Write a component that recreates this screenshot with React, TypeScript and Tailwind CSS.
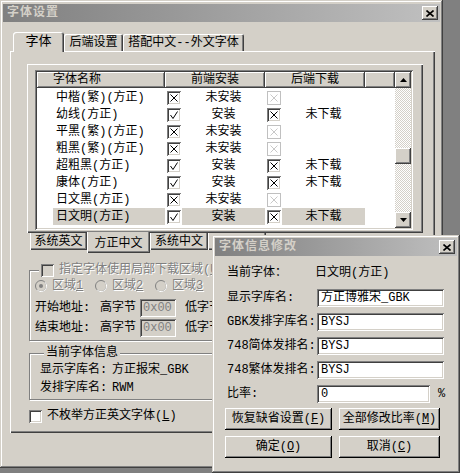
import React from 'react';

type Mark = 'v' | 'x' | 'xd';

type Row = { name: string; front: Mark; frontText: string; back: Mark; backText: string };

const rows: Row[] = [
  { name: '中楷(繁)(方正)', front: 'x', frontText: '未安装', back: 'xd', backText: '' },
  { name: '幼线(方正)', front: 'v', frontText: '安装', back: 'x', backText: '未下载' },
  { name: '平黑(繁)(方正)', front: 'x', frontText: '未安装', back: 'xd', backText: '' },
  { name: '粗黑(繁)(方正)', front: 'x', frontText: '未安装', back: 'xd', backText: '' },
  { name: '超粗黑(方正)', front: 'v', frontText: '安装', back: 'x', backText: '未下载' },
  { name: '康体(方正)', front: 'v', frontText: '安装', back: 'x', backText: '未下载' },
  { name: '日文黑(方正)', front: 'x', frontText: '未安装', back: 'xd', backText: '' },
  { name: '日文明(方正)', front: 'v', frontText: '安装', back: 'x', backText: '未下载' },
];

const raised =
  'shadow-[inset_-1px_-1px_0_#404040,inset_1px_1px_0_#ffffff,inset_-2px_-2px_0_#808080,inset_2px_2px_0_#d4d0c8]';
const sunken =
  'shadow-[inset_1px_1px_0_#808080,inset_-1px_-1px_0_#ffffff,inset_2px_2px_0_#404040,inset_-2px_-2px_0_#d4d0c8]';
const disabledText = 'text-[#808080] [text-shadow:1px_1px_0_#ffffff]';

const CloseButton: React.FC = () => (
  <span className={`w-[16px] h-[14px] bg-[#d4d0c8] flex items-center justify-center ${raised}`}>
    <svg width="8" height="7" viewBox="0 0 8 7">
      <path d="M0.5 0.5 7.5 6.5M7.5 0.5 0.5 6.5" stroke="#000" strokeWidth="1.6" />
    </svg>
  </span>
);

const TitleBar: React.FC<{ title: string }> = ({ title }) => (
  <div className="h-[18px] flex items-center justify-between pl-[4px] pr-[2px] bg-linear-to-r from-[#808080] to-[#c0c0c0]">
    <span className="text-[12px] font-bold text-[#d4d0c8] tracking-[1px]">{title}</span>
    <CloseButton />
  </div>
);

const MarkBox: React.FC<{ mark: Mark }> = ({ mark }) => {
  if (mark === 'xd') {
    return (
      <span className="w-[14px] h-[14px] border border-[#c0c0c0] bg-white flex items-center justify-center">
        <svg width="12" height="12" viewBox="0 0 12 12">
          <path d="M2.5 2.5 9.5 9.5M9.5 2.5 2.5 9.5" stroke="#c8c8c8" strokeWidth="1" />
        </svg>
      </span>
    );
  }
  return (
    <span className={`w-[14px] h-[14px] bg-white block ${sunken}`}>
      <svg width="14" height="14" viewBox="0 0 14 14" className="block">
        {mark === 'v' ? (
          <polyline points="3.5,7 6,10.5 10.5,3.5" fill="none" stroke="#000" strokeWidth="1" />
        ) : (
          <path d="M3.5 3.5 10.5 10.5M10.5 3.5 3.5 10.5" stroke="#000" strokeWidth="1" />
        )}
      </svg>
    </span>
  );
};

const HeaderCell: React.FC<{ className: string; children?: React.ReactNode }> = ({ className, children }) => (
  <div
    className={`h-[16px] flex items-center bg-[#d4d0c8] shadow-[inset_-1px_-1px_0_#404040,inset_1px_1px_0_#ffffff,inset_-2px_-2px_0_#808080] ${className}`}
  >
    {children}
  </div>
);

const Arrow: React.FC<{ up?: boolean }> = ({ up }) => (
  <span className={`w-[16px] h-[16px] bg-[#d4d0c8] flex items-center justify-center ${raised}`}>
    <svg width="7" height="4" viewBox="0 0 7 4">
      <polygon points={up ? '3.5,0 7,4 0,4' : '0,0 7,0 3.5,4'} fill="#000" />
    </svg>
  </span>
);

const ListRow: React.FC<{ row: Row; selected: boolean }> = ({ row, selected }) => {
  const bg = selected ? 'bg-[#d4d0c8]' : '';
  return (
    <div className="flex h-[17px]">
      <div className="w-[128px] pl-[16px] h-full">
        <div className={`h-full flex items-center pl-[3px] whitespace-nowrap ${bg}`}>{row.name}</div>
      </div>
      <div className="w-[100px] h-full flex items-center">
        <div className="pl-[2px] pr-[1px] h-full flex items-center">
          <MarkBox mark={row.front} />
        </div>
        <div className={`flex-1 h-full flex items-center justify-center ${bg}`}>{row.frontText}</div>
      </div>
      <div className="w-[100px] h-full flex items-center">
        <div className="pl-[2px] pr-[1px] h-full flex items-center">
          <MarkBox mark={row.back} />
        </div>
        <div className={`flex-1 h-full flex items-center justify-center ${bg}`}>{row.backText}</div>
      </div>
    </div>
  );
};

const Radio: React.FC<{ checked?: boolean }> = ({ checked }) => (
  <svg width="12" height="12" viewBox="0 0 12 12" className="shrink-0">
    <circle cx="6" cy="6" r="5.5" fill="#d4d0c8" stroke="#808080" />
    <path d="M10 2.2A5.3 5.3 0 0 1 2.2 10" fill="none" stroke="#ffffff" />
    {checked && <circle cx="6" cy="6" r="2" fill="#808080" />}
  </svg>
);

const SmallCheck: React.FC<{ disabled?: boolean }> = ({ disabled }) => (
  <span className={`w-[13px] h-[13px] block shrink-0 ${disabled ? 'bg-[#d4d0c8]' : 'bg-white'} ${sunken}`} />
);

const DisabledInput: React.FC = () => (
  <span className={`w-[36px] h-[18px] bg-[#d4d0c8] flex items-center pl-[3px] text-[#808080] ${sunken}`}>0x00</span>
);

const Field: React.FC<{ label: string; value: string; w?: string }> = ({ label, value, w = 'w-[127px]' }) => (
  <div className="flex items-center h-[18px]">
    <span className="w-[90px] whitespace-nowrap">{label}</span>
    <span className={`${w} h-[18px] bg-white flex items-center pl-[4px] ${sunken}`}>{value}</span>
  </div>
);

const Button: React.FC<{ w: string; children: React.ReactNode }> = ({ w, children }) => (
  <div
    className={`${w} h-[22px] bg-[#d4d0c8] flex items-center justify-center shadow-[inset_-1px_-1px_0_#000000,inset_1px_1px_0_#ffffff,inset_-2px_-2px_0_#808080,inset_2px_2px_0_#d4d0c8]`}
  >
    {children}
  </div>
);

const Key: React.FC<{ k: string }> = ({ k }) => (
  <span>
    (<span className="underline">{k}</span>)
  </span>
);

export default function App() {
  return (
    <div className="relative w-[460px] h-[473px] bg-[#808080] overflow-hidden text-[12px] leading-[14px] text-black font-['Liberation_Mono','Noto_Sans_CJK_SC',monospace]">
      {/* 字体设置 window */}
      <div className="absolute left-0 top-0 w-[443px] h-[468px] bg-[#d4d0c8] p-[3px] shadow-[inset_-1px_-1px_0_#404040,inset_1px_1px_0_#d4d0c8,inset_-2px_-2px_0_#808080,inset_2px_2px_0_#ffffff]">
        <div className="mt-[1px]">
          <TitleBar title="字体设置" />
        </div>

        <div className="flex items-end pl-[10px] mt-[9px] h-[20px]">
          <div className="relative z-10 -mb-px h-[20px] w-[51px] bg-[#d4d0c8] rounded-t-[3px] flex items-center justify-center text-[13px] shadow-[inset_1px_1px_0_#ffffff,inset_-1px_0_0_#404040,inset_-2px_0_0_#808080]">
            字体
          </div>
          <div className="h-[17px] w-[59px] rounded-t-[2px] flex items-center justify-center shadow-[inset_1px_1px_0_#ffffff,inset_-1px_0_0_#404040,inset_-2px_0_0_#808080]">
            后端设置
          </div>
          <div className="h-[17px] w-[121px] rounded-t-[2px] flex items-center justify-center whitespace-nowrap shadow-[inset_1px_1px_0_#ffffff,inset_-1px_0_0_#404040,inset_-2px_0_0_#808080]">
            搭配中文--外文字体
          </div>
        </div>

        <div className="ml-[7px] w-[425px] h-[382px] pt-[13px] pl-[17px] shadow-[inset_1px_1px_0_#ffffff,inset_-1px_-1px_0_#404040,inset_-2px_-2px_0_#808080]">
          {/* list page */}
          <div className="w-[396px] h-[169px] pt-[6px] pl-[8px] shadow-[inset_1px_1px_0_#ffffff,inset_-1px_-1px_0_#404040,inset_-2px_-2px_0_#808080]">
            <div className={`w-[378px] h-[160px] p-[2px] bg-white ${sunken}`}>
              <div className="flex h-full">
                <div className="flex-1 flex flex-col">
                  <div className="flex">
                    <HeaderCell className="w-[128px] pl-[16px]">字体名称</HeaderCell>
                    <HeaderCell className="w-[100px] justify-center">前端安装</HeaderCell>
                    <HeaderCell className="w-[100px] justify-center">后端下载</HeaderCell>
                    <HeaderCell className="flex-1" />
                  </div>
                  <div className="pt-[1px]">
                    {rows.map((r, i) => (
                      <ListRow key={r.name} row={r} selected={i === rows.length - 1} />
                    ))}
                  </div>
                </div>
                <div className="w-[16px] flex flex-col">
                  <Arrow up />
                  <div className="flex-1 bg-[image:repeating-conic-gradient(#d4d0c8_0_25%,#ffffff_0_50%)] bg-[length:2px_2px]">
                    <div className="h-[60px]" />
                    <div className={`h-[16px] bg-[#d4d0c8] ${raised}`} />
                  </div>
                  <Arrow />
                </div>
              </div>
            </div>
          </div>

          {/* bottom tabs */}
          <div className="flex ml-[3px] h-[20px]">
            <div className="h-[17px] w-[57px] flex items-center justify-center shadow-[inset_1px_0_0_#ffffff,inset_-1px_-1px_0_#404040,inset_-2px_-2px_0_#808080]">
              系统英文
            </div>
            <div className="relative z-10 -mt-px h-[21px] w-[63px] bg-[#d4d0c8] flex items-center justify-center pt-[3px] shadow-[inset_1px_0_0_#ffffff,inset_-1px_-1px_0_#404040,inset_-2px_-2px_0_#808080]">
              方正中文
            </div>
            <div className="h-[17px] w-[58px] flex items-center justify-center shadow-[inset_1px_0_0_#ffffff,inset_-1px_-1px_0_#404040,inset_-2px_-2px_0_#808080]">
              系统中文
            </div>
            <div className="h-[17px] w-[58px] shadow-[inset_1px_0_0_#ffffff,inset_-1px_-1px_0_#404040,inset_-2px_-2px_0_#808080]" />
          </div>

          {/* 局部下载区域 */}
          <fieldset className="mt-[10px] ml-[2px] w-[388px] border border-[#808080] shadow-[inset_1px_1px_0_#ffffff,1px_1px_0_#ffffff] pl-[5px] pb-[3px]">
            <legend className="ml-[4px] px-[2px] bg-[#d4d0c8] flex items-center gap-[5px]">
              <SmallCheck disabled />
              <span className={disabledText}>
                指定字体使用局部下载区域<Key k="U" />
              </span>
            </legend>
            <div className="flex items-center h-[14px] mt-[2px]">
              {['1', '2', '3'].map((n, i) => (
                <div key={n} className="w-[60px] flex items-center gap-[5px]">
                  <Radio checked={i === 0} />
                  <span className={disabledText}>
                    区域<span className="underline">{n}</span>
                  </span>
                </div>
              ))}
            </div>
            <div className="flex items-center h-[18px] mt-[6px]">
              <span className="w-[65px]">开始地址:</span>
              <span className="w-[40px]">高字节</span>
              <DisabledInput />
              <span className="ml-[9px]">低字节</span>
            </div>
            <div className="flex items-center h-[18px] mt-[2px]">
              <span className="w-[65px]">结束地址:</span>
              <span className="w-[40px]">高字节</span>
              <DisabledInput />
              <span className="ml-[9px]">低字节</span>
            </div>
          </fieldset>

          {/* 当前字体信息 */}
          <fieldset className="mt-[5px] ml-[2px] w-[388px] border border-[#808080] shadow-[inset_1px_1px_0_#ffffff,1px_1px_0_#ffffff] pl-[10px] pb-[4px]">
            <legend className="ml-[4px] px-[2px] bg-[#d4d0c8]">当前字体信息</legend>
            <div className="flex items-center h-[14px] mt-[3px]">
              <span className="w-[72px]">显示字库名:</span>
              <span>方正报宋_GBK</span>
            </div>
            <div className="flex items-center h-[14px] mt-[4px]">
              <span className="w-[72px]">发排字库名:</span>
              <span>RWM</span>
            </div>
          </fieldset>

          <div className="flex items-center gap-[5px] ml-[2px] mt-[9px] h-[14px]">
            <SmallCheck />
            <span>
              不枚举方正英文字体<Key k="L" />
            </span>
          </div>
        </div>
      </div>

      {/* 字体信息修改 dialog */}
      <div className="absolute left-[212px] top-[235px] w-[248px] h-[238px] bg-[#d4d0c8] p-[3px] shadow-[inset_-1px_-1px_0_#404040,inset_1px_1px_0_#d4d0c8,inset_-2px_-2px_0_#808080,inset_2px_2px_0_#ffffff]">
        <TitleBar title="字体信息修改" />
        <div className="pl-[12px] flex flex-col">
          <div className="flex items-center h-[14px] mt-[10px]">
            <span className="w-[88px]">当前字体：</span>
            <span>日文明(方正)</span>
          </div>
          <div className="flex flex-col gap-[6px] mt-[9px]">
            <Field label="显示字库名:" value="方正博雅宋_GBK" />
            <Field label="GBK发排字库名:" value="BYSJ" />
            <Field label="748简体发排名:" value="BYSJ" />
            <Field label="748繁体发排名:" value="BYSJ" />
            <div className="flex items-center">
              <Field label="比率:" value="0" w="w-[113px]" />
              <span className="ml-[8px]">%</span>
            </div>
          </div>
        </div>
        <div className="pl-[10px] mt-[5px] flex flex-col gap-[6px]">
          <div className="flex gap-[7px]">
            <Button w="w-[107px]">
              恢复缺省设置<Key k="F" />
            </Button>
            <Button w="w-[101px]">
              全部修改比率<Key k="M" />
            </Button>
          </div>
          <div className="flex gap-[7px]">
            <Button w="w-[107px]">
              确定<Key k="O" />
            </Button>
            <Button w="w-[101px]">
              取消<Key k="C" />
            </Button>
          </div>
        </div>
      </div>
    </div>
  );
}
